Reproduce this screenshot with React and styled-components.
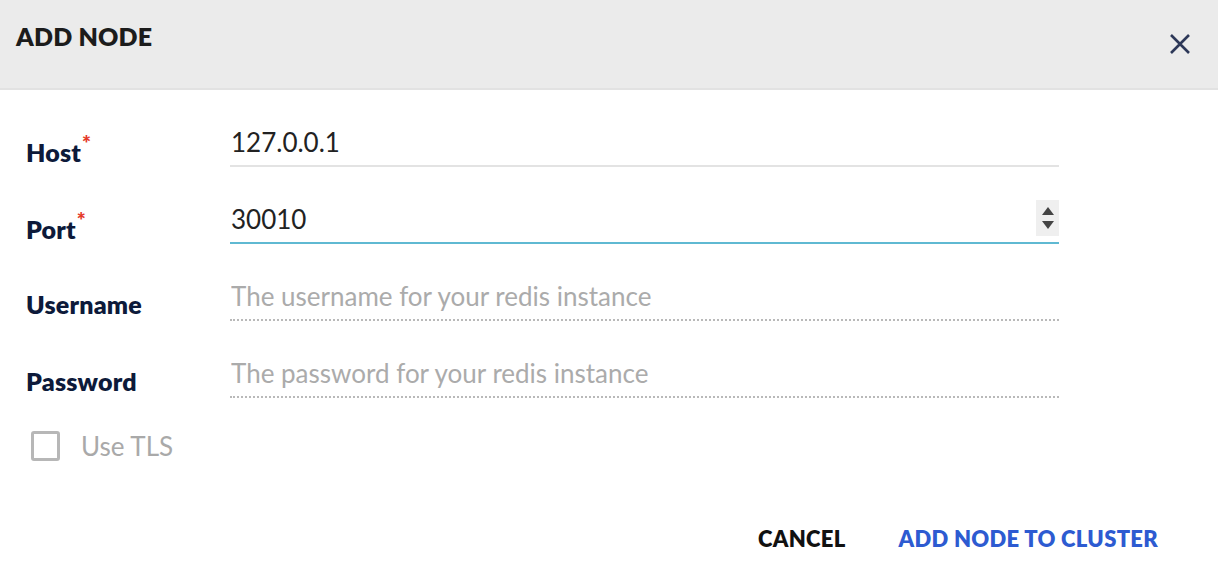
import React from 'react';
import styled, { createGlobalStyle } from 'styled-components';

const GlobalStyle = createGlobalStyle`
  html, body {
    margin: 0;
    padding: 0;
    background: #ffffff;
    font-family: Lato, "Open Sans", sans-serif;
  }
`;

const Dialog = styled.div`
  width: 1218px;
  height: 582px;
  display: flex;
  flex-direction: column;
  background: #ffffff;
`;

const Header = styled.div`
  height: 88px;
  background: #ebebeb;
  border-bottom: 2px solid #e2e2e2;
  display: flex;
  align-items: flex-start;
  justify-content: space-between;
  padding: 0 26px 0 16px;
`;

const Title = styled.h2`
  margin: 21px 0 0;
  font-size: 25px;
  font-weight: 800;
  color: #1c1c1c;
  letter-spacing: 0.2px;
`;

const CloseButton = styled.button`
  margin-top: 32px;
  width: 24px;
  height: 24px;
  padding: 0;
  border: none;
  background: transparent;
  display: flex;
  align-items: center;
  justify-content: center;
  cursor: pointer;
`;

const Form = styled.div`
  padding: 31px 0 0 26px;
  display: flex;
  flex-direction: column;
  gap: 31px;
`;

const Row = styled.div`
  display: grid;
  grid-template-columns: 204px 829px;
  align-items: center;
`;

const Label = styled.label`
  margin-top: ${p => (p.$low ? '16px' : '12px')};
  font-size: 25px;
  font-weight: 800;
  color: #0d1a3a;
  letter-spacing: 0.2px;
`;

const Star = styled.sup`
  color: #e53a2a;
  font-size: 21px;
  margin-left: 1px;
  vertical-align: 11px;
  line-height: 0;
`;

const Field = styled.div`
  position: relative;
  height: 44px;
  border-bottom: 2px ${p => (p.$dotted ? 'dotted' : 'solid')} ${p => p.$color || '#e3e3e3'};
  display: flex;
  align-items: center;
`;

const Input = styled.input`
  flex: 1;
  margin-top: -3px;
  border: none;
  outline: none;
  background: transparent;
  padding: 0 0 0 1px;
  font-family: inherit;
  font-size: 26px;
  color: #222222;
  &::placeholder {
    color: #ababab;
  }
`;

const Spinner = styled.div`
  position: absolute;
  right: 0;
  top: 2px;
  width: 23px;
  height: 36px;
  background: #efefef;
  display: flex;
  flex-direction: column;
  align-items: center;
  justify-content: center;
  gap: 6px;
`;

const Tri = styled.div`
  width: 0;
  height: 0;
  border-left: 6px solid transparent;
  border-right: 6px solid transparent;
  ${p => (p.$down ? 'border-top: 8px solid #444;' : 'border-bottom: 8px solid #444;')}
`;

const CheckRow = styled.label`
  display: flex;
  align-items: center;
  gap: 21px;
  margin: 1px 0 0 5px;
  color: #a9a9a9;
  font-size: 26px;
`;

const Box = styled.span`
  width: 23px;
  height: 24px;
  border: 3px solid #b7b7b7;
  border-radius: 3px;
`;

const Footer = styled.div`
  margin-top: auto;
  height: 57px;
  display: flex;
  justify-content: flex-end;
  align-items: flex-start;
  gap: 53px;
  padding-right: 60px;
`;

const Button = styled.button`
  border: none;
  background: transparent;
  padding: 0;
  font-family: inherit;
  font-size: 22px;
  font-weight: 800;
  letter-spacing: 0.3px;
  color: ${p => (p.$primary ? '#2d5bd1' : '#111111')};
  cursor: pointer;
`;

function App() {
  return (
    <Dialog>
      <GlobalStyle />
      <Header>
        <Title>ADD NODE</Title>
        <CloseButton aria-label="close">
          <svg width="22" height="22" viewBox="0 0 22 22">
            <path d="M2 2 L20 20 M20 2 L2 20" stroke="#2d3858" strokeWidth="2.6" />
          </svg>
        </CloseButton>
      </Header>

      <Form>
        <Row>
          <Label $low>Host<Star>*</Star></Label>
          <Field>
            <Input defaultValue="127.0.0.1" />
          </Field>
        </Row>
        <Row>
          <Label $low>Port<Star>*</Star></Label>
          <Field $color="#5fb9d2">
            <Input defaultValue="30010" />
            <Spinner>
              <Tri />
              <Tri $down />
            </Spinner>
          </Field>
        </Row>
        <Row>
          <Label>Username</Label>
          <Field $dotted $color="#b9b9b9">
            <Input placeholder="The username for your redis instance" />
          </Field>
        </Row>
        <Row>
          <Label>Password</Label>
          <Field $dotted $color="#b9b9b9">
            <Input placeholder="The password for your redis instance" />
          </Field>
        </Row>
        <CheckRow>
          <Box />
          Use TLS
        </CheckRow>
      </Form>

      <Footer>
        <Button>CANCEL</Button>
        <Button $primary>ADD NODE TO CLUSTER</Button>
      </Footer>
    </Dialog>
  );
}

export default App;
